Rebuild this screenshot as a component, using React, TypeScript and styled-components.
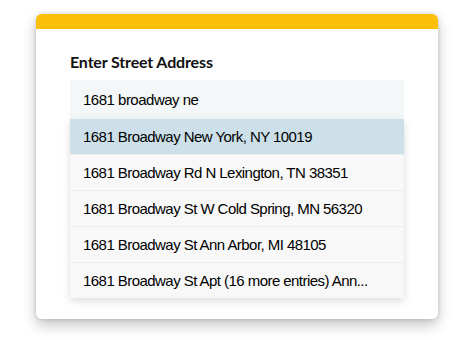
import React from 'react';
import styled, { createGlobalStyle } from 'styled-components';

const GlobalStyle = createGlobalStyle`
    html, body {
        margin: 0;
        padding: 0;
        background: #ffffff;
    }
`;

const Page = styled.div`
    width: 474px;
    height: 340px;
    padding: 14px 36px 0 36px;
    box-sizing: border-box;
`;

const Card = styled.div`
    width: 402px;
    height: 305px;
    background: #ffffff;
    border-radius: 6px;
    overflow: hidden;
    box-shadow: 0 6px 14px rgba(0, 0, 0, 0.24), 0 0 4px rgba(0, 0, 0, 0.14);
    display: flex;
    flex-direction: column;
`;

const TopBar = styled.div`
    height: 15px;
    background: #fcbf08;
    flex-shrink: 0;
`;

const Body = styled.div`
    padding: 23px 34px 0 34px;
    display: flex;
    flex-direction: column;
`;

const Label = styled.h2`
    margin: 0 0 8px 0;
    font-family: Lato, 'Noto Sans', sans-serif;
    font-weight: 700;
    font-size: 16px;
    line-height: 20px;
    color: #111;
    letter-spacing: -0.15px;
`;

const Input = styled.div`
    height: 39px;
    background: #f4f7f8;
    padding: 0 13px;
    display: flex;
    align-items: center;
    font-family: 'Liberation Sans', Arial, sans-serif;
    font-size: 15px;
    letter-spacing: -0.5px;
    color: #000;
`;

const Dropdown = styled.ul`
    list-style: none;
    margin: 0;
    padding: 0;
    background: #f8f8f8;
    box-shadow: 0 3px 8px rgba(0, 0, 0, 0.14);
`;

const Option = styled.li<{ $active?: boolean }>`
    height: 36px;
    box-sizing: border-box;
    padding: 0 13px;
    display: flex;
    align-items: center;
    font-family: 'Liberation Sans', Arial, sans-serif;
    font-size: 15px;
    letter-spacing: -0.55px;
    color: #000;
    white-space: nowrap;
    background: ${(p) => (p.$active ? '#cde0e9' : '#f8f8f8')};
    border-top: 1px solid ${(p) => (p.$active ? '#cde0e9' : '#ececec')};

    &:first-child {
        border-top: none;
        height: 35px;
    }
`;

const options = [
    '1681 Broadway New York, NY 10019',
    '1681 Broadway Rd N Lexington, TN 38351',
    '1681 Broadway St W Cold Spring, MN 56320',
    '1681 Broadway St Ann Arbor, MI 48105',
    '1681 Broadway St Apt (16 more entries) Ann...',
];

export default function App() {
    return (
        <Page>
            <GlobalStyle />
            <Card>
                <TopBar />
                <Body>
                    <Label>Enter Street Address</Label>
                    <Input>1681 broadway ne</Input>
                    <Dropdown>
                        {options.map((o, i) => (
                            <Option key={i} $active={i === 0}>
                                {o}
                            </Option>
                        ))}
                    </Dropdown>
                </Body>
            </Card>
        </Page>
    );
}
